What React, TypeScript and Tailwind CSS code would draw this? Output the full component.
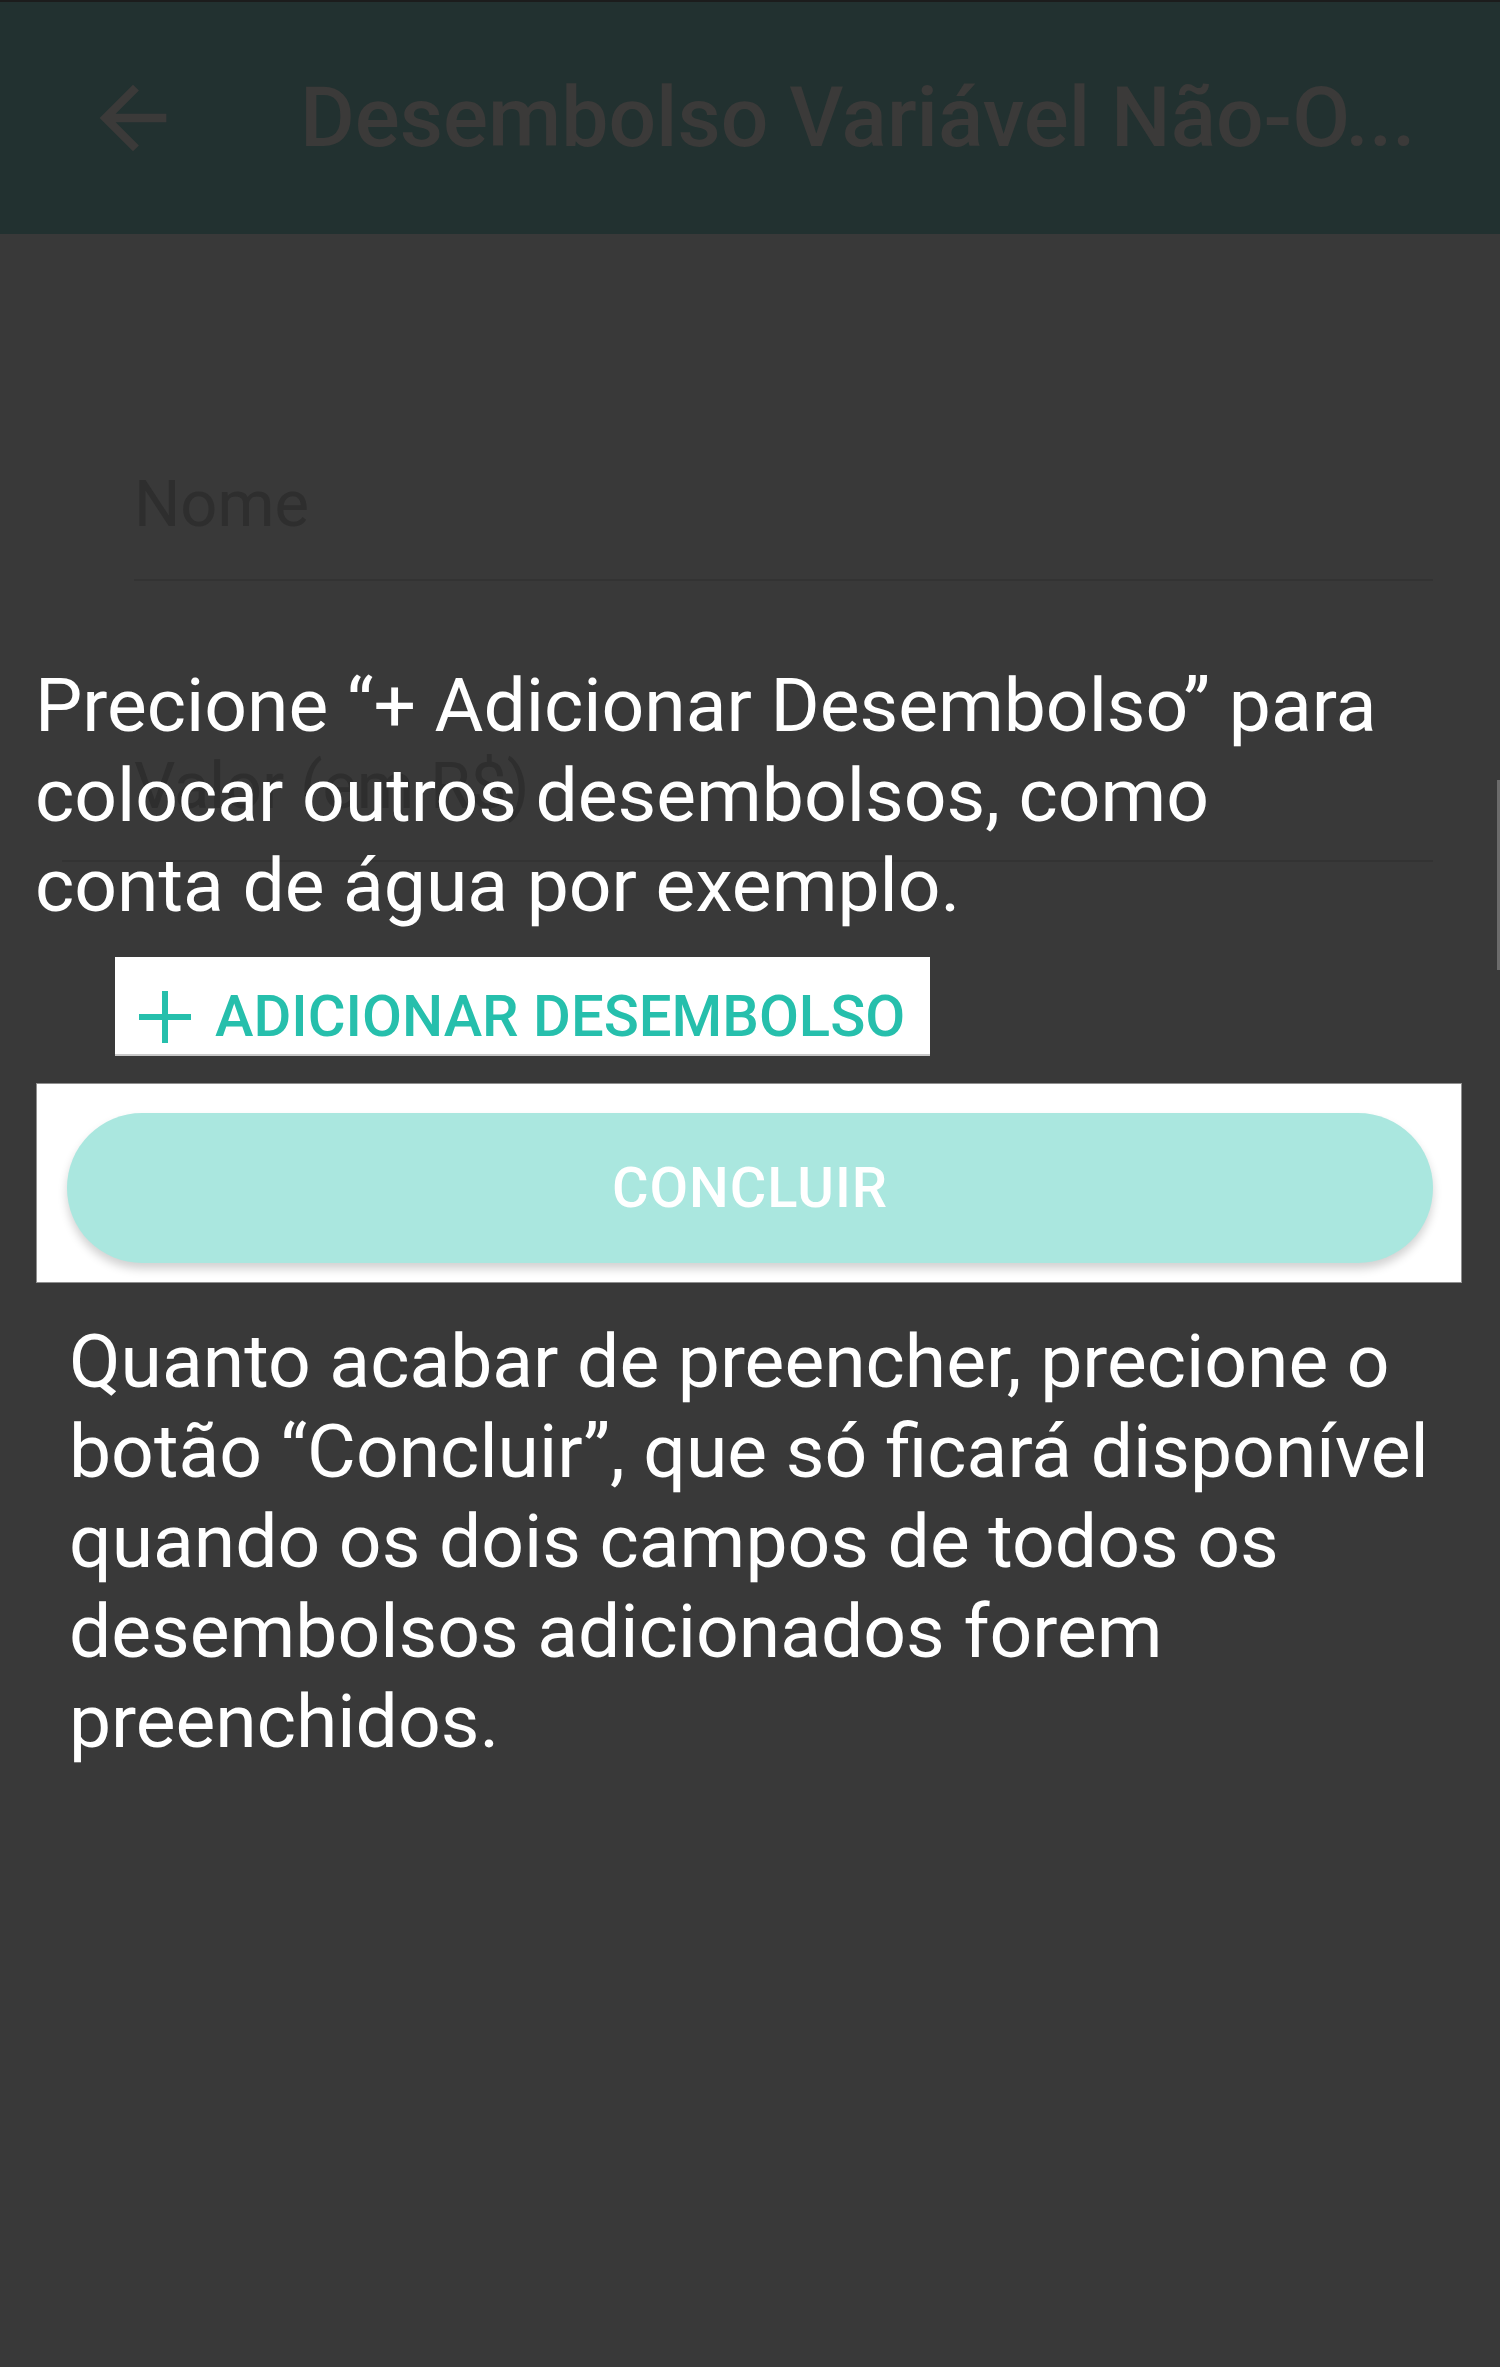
export default function App() {
  return (
    <div className="relative w-[1500px] h-[2367px] bg-[#393939] overflow-hidden" style={{ fontFamily: "Roboto, 'Noto Sans', sans-serif" }}>
      {/* dimmed screen underneath */}
      <div className="h-[234px] bg-[#223130] border-t-2 border-[#1c1c1c] flex items-center">
        <svg viewBox="0 0 24 24" className="w-[100px] h-[100px] ml-[83px] fill-[#3b3a39]">
          <path d="M20 11H7.83l5.59-5.59L12 4l-8 8 8 8 1.41-1.41L7.83 13H20v-2z" />
        </svg>
        <h1 className="ml-[117px] text-[84px] leading-none font-medium text-[#3b3a39] whitespace-nowrap">
          Desembolso Variável Não-O...
        </h1>
      </div>
      <div className="pl-[134px] pr-[67px]">
        <div className="pt-[232px] pb-[37px] border-b-2 border-[#333333]">
          <span className="block text-[65px] leading-[76px] text-[#2e2e2e]">Nome</span>
        </div>
        <div className="mt-[167px] pb-[36px] border-b-2 border-[#333333] -ml-[72px] pl-[72px]">
          <span className="block text-[65px] leading-[76px] text-[#2e2e2e]">Valor (em R$)</span>
        </div>
      </div>

      {/* coach mark layer */}
      <div className="absolute inset-x-0 top-0 pt-[660px]">
        <p className="ml-[35px] text-[75px] leading-[90px] text-white whitespace-nowrap">
          Precione “+ Adicionar Desembolso” para<br />
          colocar outros desembolsos, como<br />
          conta de água por exemplo.
        </p>
        <div className="mt-[27px] ml-[115px] w-[815px] h-[99px] bg-white border-b-2 border-[#c9c9c9] flex items-center">
          <svg viewBox="0 0 52 52" className="ml-[24px] w-[52px] h-[52px] mt-[22px] shrink-0">
            <path d="M0 26H52M26 0V52" stroke="#26bfac" strokeWidth="6" />
          </svg>
          <span className="ml-[24px] mt-[20px] text-[58px] leading-none font-medium text-[#26bfac] whitespace-nowrap">
            ADICIONAR DESEMBOLSO
          </span>
        </div>
        <div className="mt-[27px] ml-[36px] w-[1426px] h-[200px] bg-white border border-[#8f8f8f] pt-[29px] pl-[30px] pr-[28px]">
          <div className="h-[150px] rounded-full bg-[#aae7df] shadow-[0_6px_10px_rgba(0,0,0,0.18)] flex items-center justify-center">
            <span className="text-[56px] leading-none font-medium text-white tracking-[1px]">CONCLUIR</span>
          </div>
        </div>
        <p className="mt-[33px] ml-[69px] text-[75px] leading-[90px] text-white whitespace-nowrap">
          Quanto acabar de preencher, precione o<br />
          botão “Concluir”, que só ficará disponível<br />
          quando os dois campos de todos os<br />
          desembolsos adicionados forem<br />
          preenchidos.
        </p>
      </div>

      {/* scroll indicator */}
      <div className="absolute right-0 top-[780px] w-[3px] h-[190px] bg-[#6b6b6b]" />
    </div>
  );
}
